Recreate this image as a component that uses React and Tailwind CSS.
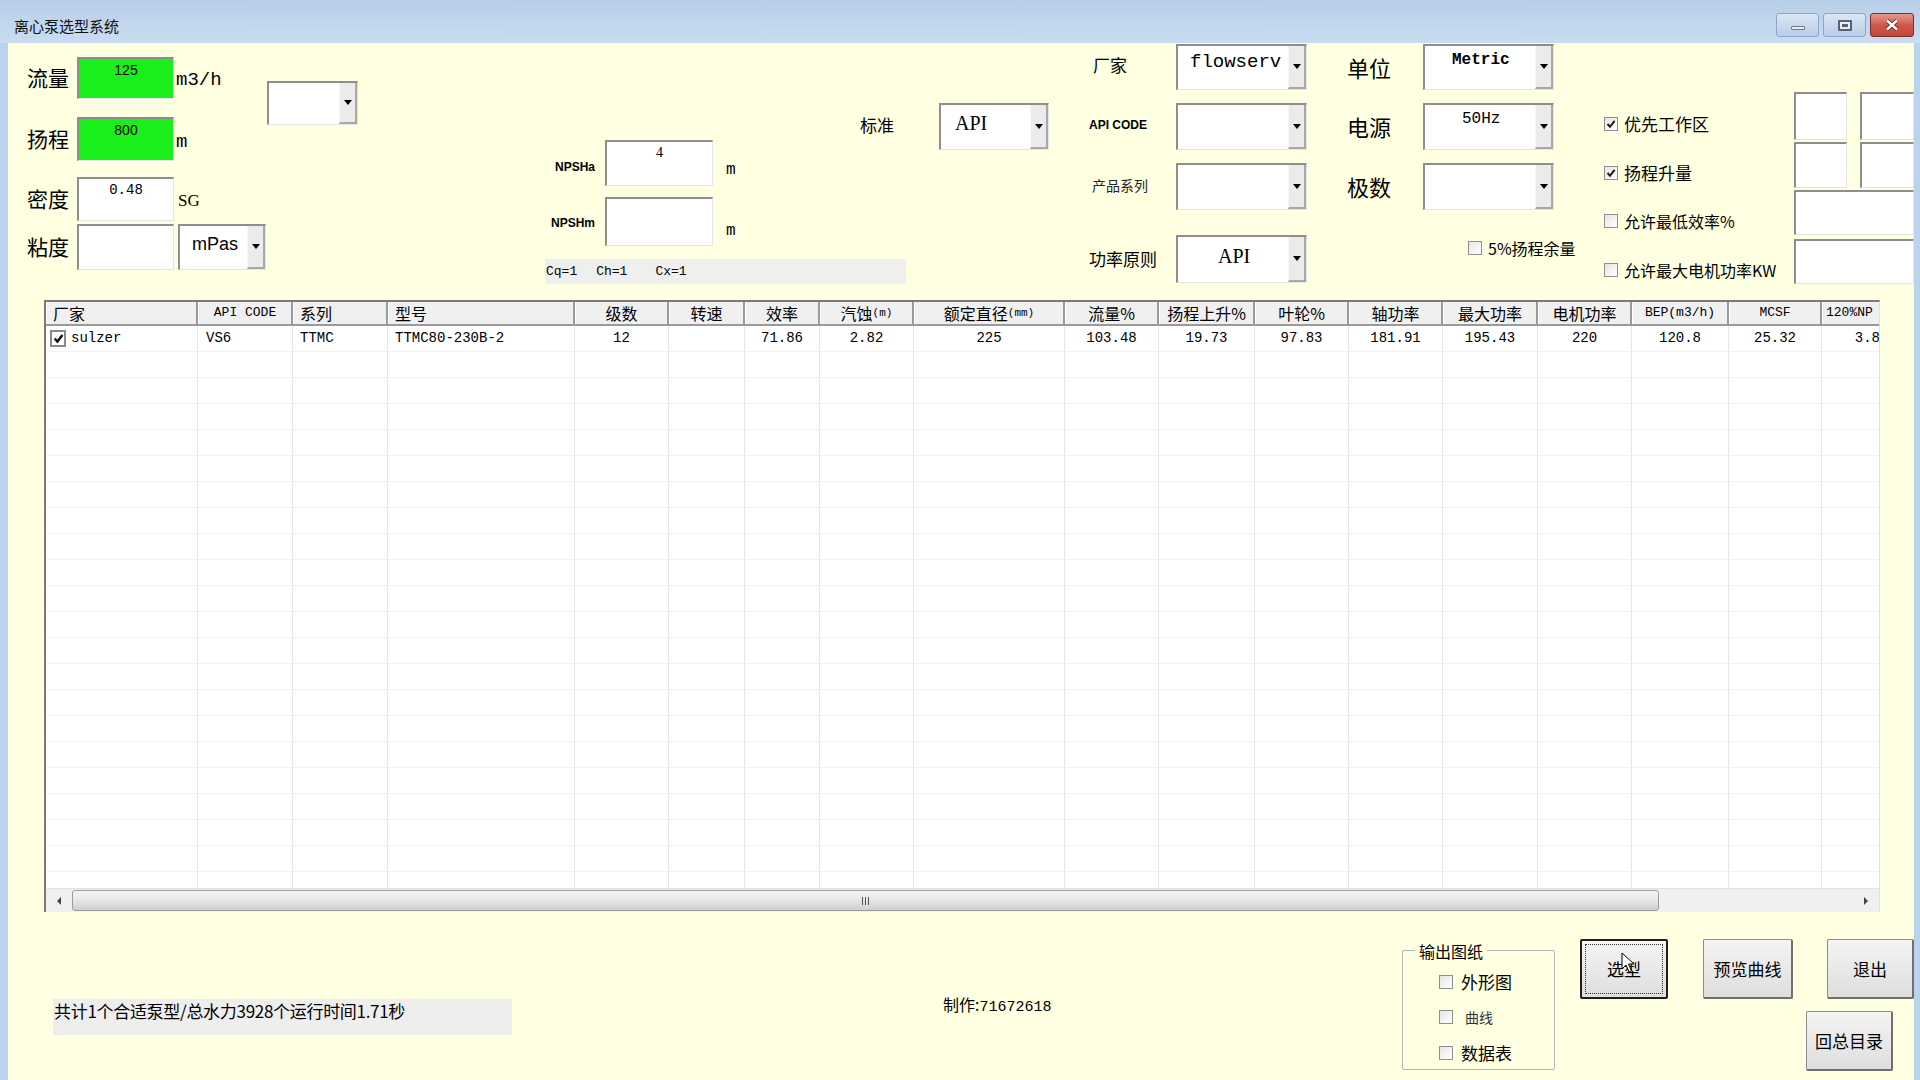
import React from "react";

const sunken =
  "border-t-2 border-l-2 border-t-[#8e8e8e] border-l-[#8e8e8e] border-b border-r border-b-[#e4e4e4] border-r-[#e4e4e4]";

const columns = [
  { h: "厂家", w: "w-[152px]", ha: "justify-start pl-[6px]", d: "sulzer", da: "justify-start pl-[4px]", check: true },
  { h: "API CODE", w: "w-[95px]", ha: "justify-center", d: "VS6", da: "justify-start pl-[8px]", latin: true },
  { h: "系列", w: "w-[95px]", ha: "justify-start pl-[6px]", d: "TTMC", da: "justify-start pl-[7px]" },
  { h: "型号", w: "w-[187px]", ha: "justify-start pl-[6px]", d: "TTMC80-230B-2", da: "justify-start pl-[7px]" },
  { h: "级数", w: "w-[94px]", ha: "justify-center", d: "12", da: "justify-center" },
  { h: "转速", w: "w-[76px]", ha: "justify-center", d: "", da: "justify-center" },
  { h: "效率", w: "w-[75px]", ha: "justify-center", d: "71.86", da: "justify-center" },
  { h: "汽蚀", small: "(m)", w: "w-[94px]", ha: "justify-center", d: "2.82", da: "justify-center" },
  { h: "额定直径", small: "(mm)", w: "w-[151px]", ha: "justify-center", d: "225", da: "justify-center" },
  { h: "流量%", w: "w-[94px]", ha: "justify-center", d: "103.48", da: "justify-center" },
  { h: "扬程上升%", w: "w-[96px]", ha: "justify-center", d: "19.73", da: "justify-center" },
  { h: "叶轮%", w: "w-[94px]", ha: "justify-center", d: "97.83", da: "justify-center" },
  { h: "轴功率", w: "w-[94px]", ha: "justify-center", d: "181.91", da: "justify-center" },
  { h: "最大功率", w: "w-[95px]", ha: "justify-center", d: "195.43", da: "justify-center" },
  { h: "电机功率", w: "w-[94px]", ha: "justify-center", d: "220", da: "justify-center" },
  { h: "BEP(m3/h)", w: "w-[97px]", ha: "justify-center", d: "120.8", da: "justify-center", latin: true },
  { h: "MCSF", w: "w-[93px]", ha: "justify-center", d: "25.32", da: "justify-center", latin: true },
  { h: "120%NP", w: "w-[60px]", ha: "justify-start pl-[3px]", d: "3.8", da: "justify-end pr-[1px]", latin: true },
];

function Arrow() {
  return (
    <svg width="8" height="5" viewBox="0 0 8 5">
      <path d="M0 0h8L4 5z" fill="#000" />
    </svg>
  );
}

function Combo({ className, text, textCls }) {
  return (
    <div className={`flex shrink-0 bg-white ${sunken} ${className}`}>
      <div className={`flex-1 overflow-hidden whitespace-nowrap ${textCls || ""}`}>{text}</div>
      <div className="w-[18px] flex items-center justify-center bg-[#ebebeb] border-l border-l-[#f8f8f8] border-r-2 border-b-2 border-r-[#a8a8a8] border-b-[#a8a8a8]">
        <Arrow />
      </div>
    </div>
  );
}

function Check({ on }) {
  return (
    <div className="w-[14px] h-[14px] border border-[#8f8f8f] bg-gradient-to-br from-[#e6e6e6] to-white flex items-center justify-center shrink-0">
      {on && (
        <svg width="10" height="10" viewBox="0 0 10 10">
          <path d="M1.5 5 L4 7.8 L8.6 1.8" stroke="#1a1a1a" strokeWidth="2" fill="none" />
        </svg>
      )}
    </div>
  );
}

function Button({ className, children, focus }) {
  return (
    <div
      className={`relative shrink-0 flex items-center justify-center rounded-[2px] bg-gradient-to-b from-[#f4f4f4] to-[#dedede] text-[17px] ${
        focus ? "border-2 border-[#1e1e1e]" : "border border-[#8d8d8d] border-r-2 border-b-2 border-r-[#6f6f6f] border-b-[#6f6f6f]"
      } ${className}`}
    >
      {focus && <div className="absolute inset-[3px] border border-dotted border-[#333]" />}
      {children}
    </div>
  );
}

function TitleBar() {
  return (
    <div className="h-[43px] flex items-start bg-gradient-to-b from-[#b8cfe9] to-[#cadcf1]">
      <div className="mt-[15px] ml-[14px] text-[15px] text-[#111] font-['Noto_Sans_CJK_SC',sans-serif]">离心泵选型系统</div>
      <div className="ml-auto mt-[13px] mr-[6px] flex gap-[4px]">
        <div className="w-[43px] h-[24px] rounded-[3px] border border-[#8ea6c4] bg-gradient-to-b from-[#dbe7f5] to-[#b9cde6] flex items-end justify-center pb-[6px]">
          <div className="w-[14px] h-[4px] bg-[#ececec] border border-[#6a7c92] rounded-[1px]" />
        </div>
        <div className="w-[43px] h-[24px] rounded-[3px] border border-[#8ea6c4] bg-gradient-to-b from-[#dbe7f5] to-[#b9cde6] flex items-center justify-center">
          <div className="w-[14px] h-[11px] border-2 border-[#53647a] bg-[#ececec] rounded-[1px] flex items-center justify-center">
            <div className="w-[6px] h-[3px] bg-[#53647a]" />
          </div>
        </div>
        <div className="w-[44px] h-[24px] rounded-[3px] border border-[#7d2d28] bg-gradient-to-b from-[#e49a8f] via-[#cc5a4c] to-[#c14838] flex items-center justify-center">
          <svg width="14" height="12" viewBox="0 0 14 12">
            <path d="M2 1.5 L12 10.5 M12 1.5 L2 10.5" stroke="#5a1d17" strokeWidth="4" />
            <path d="M2 1.5 L12 10.5 M12 1.5 L2 10.5" stroke="#fff" strokeWidth="2.4" />
          </svg>
        </div>
      </div>
    </div>
  );
}

function TopForm() {
  return (
    <div className="h-[257px] flex items-start shrink-0">
      {/* 流量 / 扬程 / 密度 / 粘度 */}
      <div className="ml-[19px] w-[240px] shrink-0 flex flex-col">
        <div className="mt-[14px] h-[42px] flex items-center">
          <div className="w-[50px] text-[21px] font-['Noto_Sans_CJK_SC',sans-serif]">流量</div>
          <div className={`w-[97px] h-full bg-[#1bef1b] ${sunken} text-center text-[14px] font-['Liberation_Sans',sans-serif] pt-[1px]`}>125</div>
          <div className="ml-[2px] text-[19px] self-center mt-[4px]">m3/h</div>
        </div>
        <div className="mt-[18px] h-[44px] flex items-center">
          <div className="w-[50px] text-[21px] font-['Noto_Sans_CJK_SC',sans-serif]">扬程</div>
          <div className={`w-[97px] h-full bg-[#1bef1b] ${sunken} text-center text-[14px] font-['Liberation_Sans',sans-serif] pt-[1px]`}>800</div>
          <div className="ml-[2px] text-[19px] mt-[6px]">m</div>
        </div>
        <div className="mt-[16px] h-[44px] flex items-center">
          <div className="w-[50px] text-[21px] font-['Noto_Sans_CJK_SC',sans-serif]">密度</div>
          <div className={`w-[97px] h-full bg-white ${sunken} text-center text-[14px] pt-[1px]`}>0.48</div>
          <div className="ml-[4px] text-[17px] mt-[4px] font-['Liberation_Serif',serif]">SG</div>
        </div>
        <div className="mt-[3px] h-[46px] flex items-center">
          <div className="w-[50px] text-[21px] font-['Noto_Sans_CJK_SC',sans-serif]">粘度</div>
          <div className={`w-[97px] h-full bg-white ${sunken}`} />
          <Combo className="ml-[4px] w-[88px] h-full" text="mPas" textCls="text-[18px] pl-[12px] pt-[5px] font-['Liberation_Sans',sans-serif]" />
        </div>
      </div>
      <Combo className="mt-[38px] w-[91px] h-[44px]" text="" />

      {/* NPSH */}
      <div className="ml-[187px] w-[315px] shrink-0 flex flex-col">
        <div className="mt-[97px] h-[46px] flex">
          <div className="w-[50px] text-right self-end mb-[10px] text-[12px] font-bold font-['Liberation_Sans',sans-serif]">NPSHa</div>
          <div className={`ml-[10px] w-[108px] h-full bg-white ${sunken} text-center text-[14px] font-['Liberation_Serif',serif]`}>4</div>
          <div className="ml-[13px] mt-[18px] text-[16px]">m</div>
        </div>
        <div className="mt-[11px] h-[49px] flex">
          <div className="w-[50px] text-right mt-[17px] text-[12px] font-bold font-['Liberation_Sans',sans-serif]">NPSHm</div>
          <div className={`ml-[10px] w-[108px] h-full bg-white ${sunken}`} />
          <div className="ml-[13px] mt-[22px] text-[16px]">m</div>
        </div>
        <div className="mt-[13px] w-[361px] h-[25px] bg-[#efefef] flex items-center pl-[1px] text-[13px] whitespace-nowrap">
          <span>Cq=1</span>
          <span className="ml-[19px]">Ch=1</span>
          <span className="ml-[28px]">Cx=1</span>
        </div>
      </div>

      {/* 标准 */}
      <div className="w-[189px] shrink-0 mt-[60px] h-[47px] flex items-center">
        <div className="w-[79px] text-[17px] font-['Noto_Sans_CJK_SC',sans-serif] -mt-[4px]">标准</div>
        <Combo className="w-[110px] h-full" text="API" textCls="text-[20px] pl-[14px] pt-[3px] font-['Liberation_Serif',serif]" />
      </div>

      {/* 厂家 ... */}
      <div className="ml-[40px] w-[218px] shrink-0 flex flex-col font-['Noto_Sans_CJK_SC',sans-serif]">
        <div className="mt-[1px] h-[46px] flex items-center">
          <div className="w-[87px] pl-[4px] text-[17px] -mt-[4px]">厂家</div>
          <Combo className="w-[131px] h-full" text="flowserv" textCls="text-[19px] pl-[12px] pt-[2px] font-['Liberation_Mono',monospace]" />
        </div>
        <div className="mt-[13px] h-[47px] flex items-center">
          <div className="w-[87px] text-[12px] font-bold font-['Liberation_Sans',sans-serif] -mt-[3px]">API CODE</div>
          <Combo className="w-[131px] h-full" text="" />
        </div>
        <div className="mt-[13px] h-[47px] flex items-center">
          <div className="w-[87px] pl-[3px] text-[14px] text-[#222] -mt-[3px]">产品系列</div>
          <Combo className="w-[131px] h-full" text="" />
        </div>
        <div className="mt-[25px] h-[48px] flex items-center">
          <div className="w-[87px] text-[17px]">功率原则</div>
          <Combo className="w-[131px] h-full" text="API" textCls="text-[20px] pl-[40px] pt-[4px] font-['Liberation_Serif',serif]" />
        </div>
      </div>

      {/* 单位 ... */}
      <div className="ml-[40px] w-[207px] shrink-0 flex flex-col font-['Noto_Sans_CJK_SC',sans-serif]">
        <div className="mt-[1px] h-[46px] flex items-center">
          <div className="w-[76px] text-[22px]">单位</div>
          <Combo className="w-[131px] h-full" text="Metric" textCls="text-[16px] pl-[27px] pt-[2px] font-['Liberation_Mono',monospace] font-bold" />
        </div>
        <div className="mt-[13px] h-[47px] flex items-center">
          <div className="w-[76px] text-[22px]">电源</div>
          <Combo className="w-[131px] h-full" text="50Hz" textCls="text-[16px] pl-[37px] pt-[2px] font-['Liberation_Mono',monospace]" />
        </div>
        <div className="mt-[13px] h-[47px] flex items-center">
          <div className="w-[76px] text-[22px]">极数</div>
          <Combo className="w-[131px] h-full" text="" />
        </div>
        <div className="mt-[26px] ml-[121px] flex items-center gap-[6px] whitespace-nowrap text-[16px]">
          <Check />
          <span>5%扬程余量</span>
        </div>
      </div>

      {/* checkboxes */}
      <div className="ml-[50px] w-[190px] shrink-0 flex flex-col font-['Noto_Sans_CJK_SC',sans-serif] text-[17px] whitespace-nowrap">
        <div className="mt-[68px] h-[26px] flex items-center gap-[6px]">
          <Check on />
          <span>优先工作区</span>
        </div>
        <div className="mt-[23px] h-[26px] flex items-center gap-[6px]">
          <Check on />
          <span>扬程升量</span>
        </div>
        <div className="mt-[22px] h-[26px] flex items-center gap-[6px]">
          <Check />
          <span className="text-[16px]">允许最低效率%</span>
        </div>
        <div className="mt-[23px] h-[26px] flex items-center gap-[6px]">
          <Check />
          <span className="text-[16px]">允许最大电机功率KW</span>
        </div>
      </div>

      {/* right boxes */}
      <div className="w-[120px] shrink-0 flex flex-col">
        <div className="mt-[49px] h-[48px] flex gap-[13px]">
          <div className={`w-[53px] h-full bg-white ${sunken}`} />
          <div className={`w-[54px] h-full bg-white ${sunken}`} />
        </div>
        <div className="mt-[2px] h-[46px] flex gap-[13px]">
          <div className={`w-[53px] h-full bg-white ${sunken}`} />
          <div className={`w-[54px] h-full bg-white ${sunken}`} />
        </div>
        <div className={`mt-[2px] h-[45px] bg-white ${sunken}`} />
        <div className={`mt-[4px] h-[45px] bg-white ${sunken}`} />
      </div>
    </div>
  );
}

function Grid() {
  const rows = Array.from({ length: 22 });
  return (
    <div className="ml-[36px] w-[1836px] h-[612px] shrink-0 flex flex-col bg-white border-t-2 border-l-2 border-t-[#7a7a7a] border-l-[#7a7a7a] border-r border-r-[#e0e0e0]">
      <div className="flex-1 overflow-hidden">
        <div className="flex h-[24px] bg-[#f0f0f0] border-b-2 border-b-[#9a9a9a]">
          {columns.map((c, i) => (
            <div
              key={i}
              className={`${c.w} shrink-0 h-full flex items-center overflow-hidden whitespace-nowrap border-r-2 border-r-[#9a9a9a] border-l border-l-white ${c.ha} ${
                c.latin ? "text-[13px]" : "text-[16px] font-['Noto_Sans_CJK_SC',sans-serif]"
              }`}
            >
              {c.h}
              {c.small && <span className="text-[11px] font-['Liberation_Mono',monospace]">{c.small}</span>}
            </div>
          ))}
        </div>
        {rows.map((_, r) => (
          <div key={r} className="flex h-[26px] border-b border-b-[#f1f1f1]">
            {columns.map((c, i) => (
              <div
                key={i}
                className={`${c.w} shrink-0 h-full flex items-center overflow-hidden whitespace-nowrap border-r border-r-[#e6e6e6] text-[14px] ${c.da}`}
              >
                {r === 0 && c.check && (
                  <div className="mr-[5px]">
                    <div className="w-[16px] h-[17px] border-2 border-[#8a8a8a] bg-white flex items-center justify-center">
                      <svg width="11" height="11" viewBox="0 0 10 10">
                        <path d="M1.5 5 L4 7.8 L8.6 1.8" stroke="#111" strokeWidth="2.2" fill="none" />
                      </svg>
                    </div>
                  </div>
                )}
                {r === 0 ? c.d : ""}
              </div>
            ))}
          </div>
        ))}
      </div>
      {/* horizontal scrollbar */}
      <div className="h-[24px] flex items-center bg-[#f0f0f0] border-t border-t-[#e2e2e2]">
        <div className="w-[26px] flex justify-center">
          <svg width="4" height="8" viewBox="0 0 4 8">
            <path d="M4 0v8L0 4z" fill="#444" />
          </svg>
        </div>
        <div className="w-[1587px] h-[21px] rounded-[3px] border border-[#9c9c9c] bg-gradient-to-b from-[#f6f6f6] via-[#e6e6e6] to-[#cfcfcf] flex items-center justify-center">
          <div className="flex gap-[2px]">
            <div className="w-[1px] h-[8px] bg-[#555]" />
            <div className="w-[1px] h-[8px] bg-[#555]" />
            <div className="w-[1px] h-[8px] bg-[#555]" />
          </div>
        </div>
        <div className="ml-auto w-[26px] flex justify-center">
          <svg width="4" height="8" viewBox="0 0 4 8">
            <path d="M0 0v8L4 4z" fill="#444" />
          </svg>
        </div>
      </div>
    </div>
  );
}

function Bottom() {
  return (
    <div className="flex-1 flex items-start font-['Noto_Sans_CJK_SC',sans-serif]">
      <div className="ml-[45px] mt-[87px] w-[459px] shrink-0 h-[36px] bg-[#eeeeee] text-[17px] pl-[1px] -tracking-[0.3px] leading-[24px] whitespace-nowrap">
        共计1个合适泵型/总水力3928个运行时间1.71秒
      </div>
      <div className="ml-[431px] w-[140px] shrink-0 mt-[80px] text-[16px] whitespace-nowrap">
        制作:<span className="font-['Liberation_Mono',monospace] text-[15px]">71672618</span>
      </div>
      <div className="ml-[319px] mt-[38px] w-[153px] shrink-0 h-[120px] border border-[#b5b5b5] rounded-[2px] relative">
        <div className="absolute -top-[12px] left-[12px] px-[4px] bg-[#ffffe1] text-[16px]">输出图纸</div>
        <div className="mt-[20px] ml-[36px] flex flex-col">
          <div className="h-[22px] flex items-center gap-[8px] text-[17px]">
            <Check />
            <span>外形图</span>
          </div>
          <div className="mt-[13px] h-[22px] flex items-center gap-[12px] text-[14px] text-[#333]">
            <Check />
            <span>曲线</span>
          </div>
          <div className="mt-[14px] h-[22px] flex items-center gap-[8px] text-[17px]">
            <Check />
            <span>数据表</span>
          </div>
        </div>
      </div>
      <Button className="ml-[25px] mt-[27px] w-[88px] h-[60px]" focus>
        选型
        <svg className="absolute left-[39px] top-[11px]" width="14" height="22" viewBox="0 0 14 22">
          <path d="M1 1 L1 17 L5 13 L8 20 L10.5 19 L7.5 12 L13 12 Z" fill="#fff" stroke="#000" strokeWidth="1" />
        </svg>
      </Button>
      <Button className="ml-[35px] mt-[27px] w-[90px] h-[60px]">预览曲线</Button>
      <div className="ml-[13px] w-[108px] shrink-0 flex flex-col">
        <Button className="self-end mt-[27px] w-[87px] h-[60px]">退出</Button>
        <Button className="self-start mt-[12px] w-[87px] h-[60px]">回总目录</Button>
      </div>
    </div>
  );
}

export default function App() {
  return (
    <div className="w-[1920px] h-[1080px] overflow-hidden flex flex-col bg-[#bcd3ec] font-['Liberation_Mono','Noto_Sans_CJK_SC',monospace] text-black">
      <TitleBar />
      <div className="flex-1 ml-[8px] mr-[6px] bg-[#ffffe1] flex flex-col overflow-hidden">
        <TopForm />
        <Grid />
        <Bottom />
      </div>
    </div>
  );
}
